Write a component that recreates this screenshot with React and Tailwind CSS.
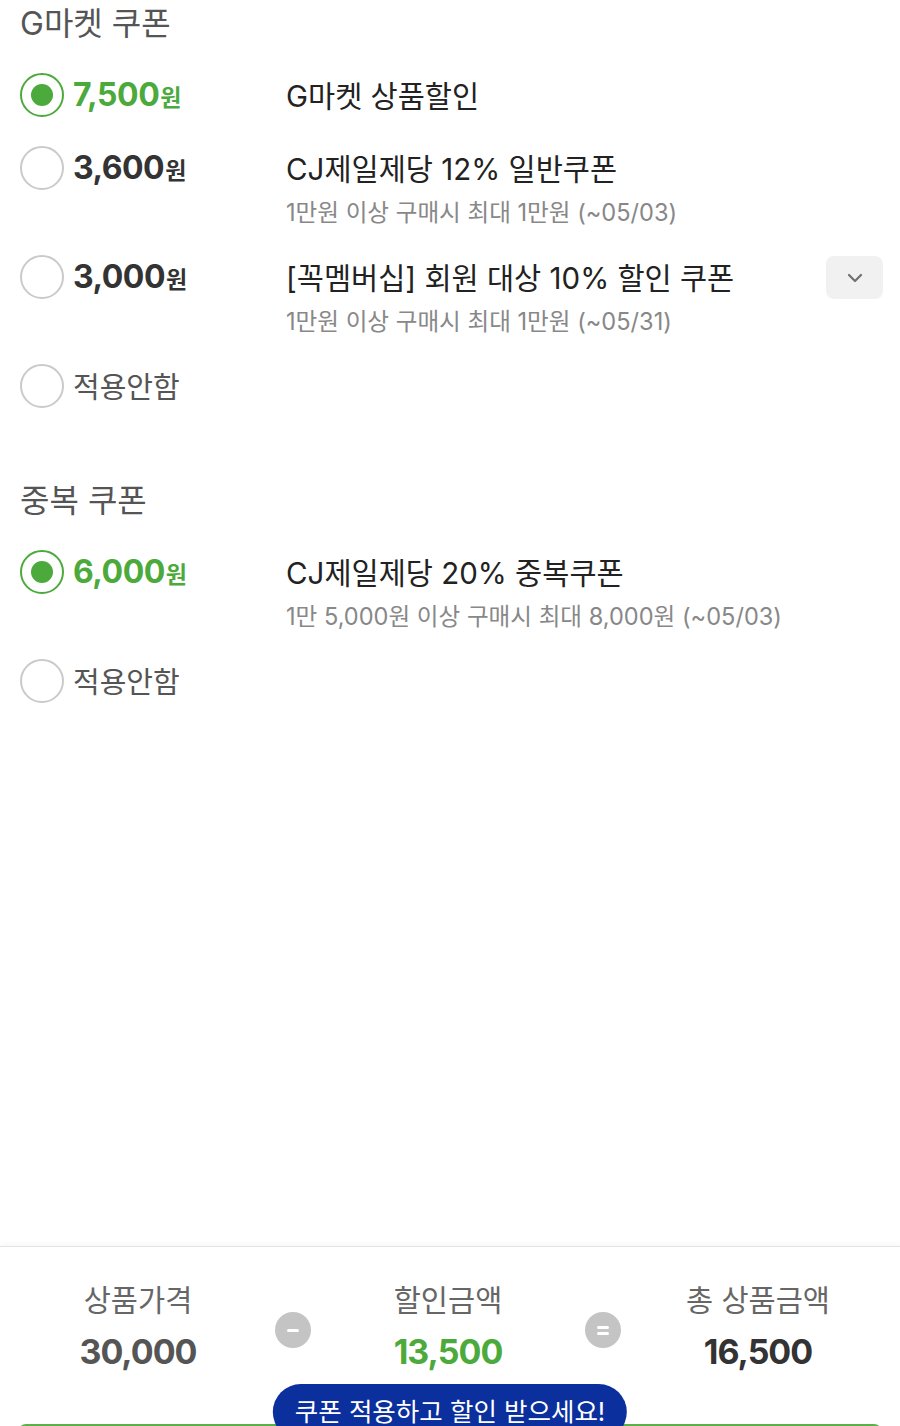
import { ChevronDown } from 'lucide-react';

const font = { fontFamily: 'Inter, "Noto Sans CJK KR", sans-serif' };

const gmarketCoupons = [
  { amount: '7,500', title: 'G마켓 상품할인', selected: true },
  { amount: '3,600', title: 'CJ제일제당 12% 일반쿠폰', sub: '1만원 이상 구매시 최대 1만원 (~05/03)' },
  { amount: '3,000', title: '[꼭멤버십] 회원 대상 10% 할인 쿠폰', sub: '1만원 이상 구매시 최대 1만원 (~05/31)', more: true },
];

const dupCoupons = [
  { amount: '6,000', title: 'CJ제일제당 20% 중복쿠폰', sub: '1만 5,000원 이상 구매시 최대 8,000원 (~05/03)', selected: true },
];

function Radio({ checked }) {
  return (
    <span
      className={
        checked
          ? 'w-[44px] h-[44px] shrink-0 rounded-full border-2 border-[#4caa3c] flex items-center justify-center'
          : 'w-[44px] h-[44px] shrink-0 rounded-full border-2 border-[#cacaca]'
      }
    >
      {checked && <span className="w-[22px] h-[22px] rounded-full bg-[#4caa3c]" />}
    </span>
  );
}

function CouponRow({ coupon }) {
  return (
    <div className="flex items-start pr-[17px]">
      <div className="w-[266px] shrink-0 h-[44px] flex items-center gap-[9px]">
        <Radio checked={coupon.selected} />
        <span
          className={
            coupon.selected
              ? 'font-bold text-[32px] tracking-[-0.5px] text-[#4caa3c] leading-none'
              : 'font-bold text-[32px] tracking-[-0.5px] text-[#333] leading-none'
          }
        >
          {coupon.amount}
          <span className="text-[23px] ml-[1px]">원</span>
        </span>
      </div>
      <div className="flex-1 flex flex-col">
        <div className="h-[44px] pt-[3px] flex items-center text-[29.5px] text-[#222]">{coupon.title}</div>
        {coupon.sub && (
          <div className="mt-[10px] leading-[26px] text-[23.6px] text-[#888]">{coupon.sub}</div>
        )}
      </div>
      {coupon.more && (
        <button className="w-[57px] h-[43px] mt-[1px] rounded-lg bg-[#f1f1f1] flex items-center justify-center">
          <ChevronDown className="w-[24px] h-[24px] text-[#707070]" strokeWidth={2.2} />
        </button>
      )}
    </div>
  );
}

function NoneRow() {
  return (
    <div className="h-[44px] flex items-center gap-[9px]">
      <Radio checked={false} />
      <span className="pt-[3px] text-[29px] text-[#555]">적용안함</span>
    </div>
  );
}

function Operator({ kind }) {
  return (
    <div className="w-[70px] shrink-0 flex justify-center pt-[32px]">
      <span className="w-[36px] h-[36px] rounded-full bg-[#c4c4c4] flex flex-col items-center justify-center gap-[3px]">
        <span className="w-[12px] h-[3px] bg-white rounded-sm" />
        {kind === 'eq' && <span className="w-[12px] h-[3px] bg-white rounded-sm" />}
      </span>
    </div>
  );
}

function Summary({ label, value, color }) {
  return (
    <div className="w-[240px] shrink-0 flex flex-col items-center">
      <div className="leading-[40px] text-[29.5px] text-[#666]">{label}</div>
      <div className={`mt-[10px] leading-[44px] text-[34px] font-bold tracking-[-1px] ${color}`}>{value}</div>
    </div>
  );
}

export default function App() {
  return (
    <div className="w-[900px] h-[1426px] overflow-hidden bg-white flex flex-col" style={font}>
      {/* Coupon list */}
      <div className="h-[1246px] shrink-0 pl-[20px]">
        <div className="flex flex-col gap-[29px]">
          <h2 className="pt-[3px] leading-[41px] text-[32px] text-[#555]">G마켓 쿠폰</h2>
          {gmarketCoupons.map((c) => (
            <CouponRow key={c.title} coupon={c} />
          ))}
          <NoneRow />
        </div>

        <div className="flex flex-col gap-[29px] mt-[69px]">
          <h2 className="pt-[3px] leading-[41px] text-[32px] text-[#555]">중복 쿠폰</h2>
          {dupCoupons.map((c) => (
            <CouponRow key={c.title} coupon={c} />
          ))}
          <NoneRow />
        </div>
      </div>

      {/* Price summary footer */}
      <div className="border-t border-[#e4e4e4] shadow-[0_-3px_6px_rgba(0,0,0,0.03)]">
        <div className="flex px-[18px] pt-[33px]">
          <Summary label="상품가격" value="30,000" color="text-[#555]" />
          <Operator kind="minus" />
          <Summary label="할인금액" value="13,500" color="text-[#4caa3c]" />
          <Operator kind="eq" />
          <Summary label="총 상품금액" value="16,500" color="text-[#333]" />
        </div>

        <div className="relative mt-[50px] mx-[18px]">
          <button className="w-full h-[80px] rounded-t-lg bg-[#5bb04a]" />
          <div className="absolute left-1/2 -translate-x-1/2 -top-[40px] h-[56px] px-[22px] rounded-full bg-[#0c2f9e] flex items-center whitespace-nowrap text-white text-[25.5px]">
            쿠폰 적용하고 할인 받으세요!
          </div>
        </div>
      </div>
    </div>
  );
}
